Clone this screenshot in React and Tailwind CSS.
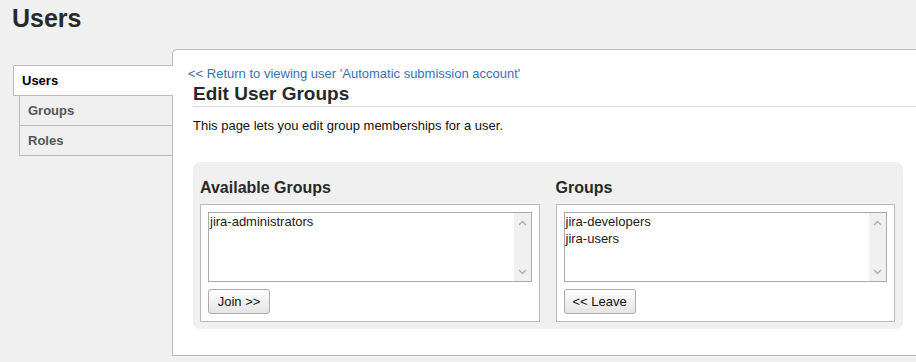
import React from "react";

function Chevron({ up }) {
  return (
    <svg width="9" height="6" viewBox="0 0 9 6" className="block">
      <path
        d={up ? "M1 5 L4.5 1.5 L8 5" : "M1 1 L4.5 4.5 L8 1"}
        fill="none"
        stroke="#b0b0b0"
        strokeWidth="1.5"
      />
    </svg>
  );
}

function ListBox({ items }) {
  return (
    <div className="flex h-[70px] border border-[#a9a9a9] bg-white">
      <div className="flex-1 pl-[1px] text-[13px] leading-[17px] text-[#1a1a1a]">
        {items.map((it) => (
          <div key={it}>{it}</div>
        ))}
      </div>
      <div className="flex w-[17px] flex-col items-center justify-between bg-[#f0f0f0] pt-[7px] pb-[6px]">
        <Chevron up />
        <Chevron />
      </div>
    </div>
  );
}

function GroupColumn({ title, items, button, btnWidth }) {
  return (
    <div className="flex flex-col">
      <h3 className="mb-[6px] text-[16px] font-bold leading-[20px] text-[#292929]">{title}</h3>
      <div className="border border-[#bbbbbb] bg-white px-[7px] pt-[7px] pb-[7px]">
        <ListBox items={items} />
        <button
          className={`mt-[7px] block h-[25px] rounded-[3px] border border-[#aaaaaa] bg-gradient-to-b from-[#ffffff] to-[#e4e4e4] text-[13px] leading-[23px] text-[#111] ${btnWidth}`}
        >
          {button}
        </button>
      </div>
    </div>
  );
}

export default function App() {
  return (
    <div className="h-[362px] w-[916px] overflow-hidden bg-[#f0f0f0] font-['Liberation_Sans',Arial,sans-serif] text-[13px] text-[#333]">
      <h1 className="pl-[12px] pt-[4px] text-[25px] font-bold leading-[29px] text-[#292929]">Users</h1>
      <div className="mt-[16px] flex">
        <nav className="w-[172px] shrink-0 pt-[16px]">
          <div className="relative z-10 -mr-[1px] ml-[13px] flex h-[31px] items-center border-y border-l border-[#bbbbbb] bg-white pl-[8px] text-[13px] font-bold text-black">
            Users
          </div>
          <div className="ml-[19px] flex h-[30px] items-center border-b border-l border-[#bbbbbb] pl-[8px] text-[13px] font-bold text-[#555]">
            Groups
          </div>
          <div className="ml-[19px] flex h-[30px] items-center border-b border-l border-[#bbbbbb] pl-[8px] text-[13px] font-bold text-[#555]">
            Roles
          </div>
        </nav>
        <main className="h-[307px] flex-1 rounded-tl-[5px] border-y border-l border-[#bbbbbb] bg-white pl-[20px] pt-[16px]">
          <a className="-ml-[5px] block leading-[16px] text-[#3b6fae]" href="#">
            &lt;&lt; Return to viewing user 'Automatic submission account'
          </a>
          <h2 className="h-[25px] border-b border-[#d8d8d8] text-[19px] font-bold leading-[24px] text-[#292929]">
            Edit User Groups
          </h2>
          <p className="mt-[11px] leading-[16px] text-[#111]">
            This page lets you edit group memberships for a user.
          </p>
          <div className="mr-[13px] mt-[28px] rounded-[7px] bg-[#f0f0f0] pb-[7px] pl-[7px] pr-[8px] pt-[16px]">
            <div className="grid grid-cols-2 gap-[16px]">
              <GroupColumn
                title="Available Groups"
                items={["jira-administrators"]}
                button="Join >>"
                btnWidth="w-[62px]"
              />
              <GroupColumn
                title="Groups"
                items={["jira-developers", "jira-users"]}
                button="<< Leave"
                btnWidth="w-[72px]"
              />
            </div>
          </div>
        </main>
      </div>
    </div>
  );
}
